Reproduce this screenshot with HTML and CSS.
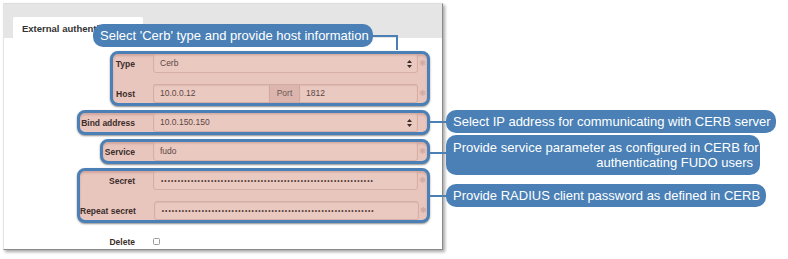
FILE: index.html
```html
<!DOCTYPE html>
<html>
<head>
<meta charset="utf-8">
<link rel="stylesheet" href="styles.css">
</head>
<body>
<div class="canvas">
  <div class="panel">
    <div class="tabs"><div class="tab">External authentication</div></div>
    <div class="form">
      <div class="group g1">
        <div class="row"><span class="lbl">Type</span><div class="field select">Cerb<svg class="arrows" width="5" height="8" viewBox="0 0 5 8"><path d="M2.5 0L5 3H0Z M2.5 8L5 5H0Z" fill="#3a2a28"/></svg></div><span class="req">✱</span></div>
        <div class="row"><span class="lbl">Host</span><div class="split"><div class="field host">10.0.0.12</div><div class="addon">Port</div><div class="field port">1812</div></div><span class="req">✱</span></div>
      </div>
      <div class="group g2">
        <div class="row"><span class="lbl">Bind address</span><div class="field select">10.0.150.150<svg class="arrows" width="5" height="8" viewBox="0 0 5 8"><path d="M2.5 0L5 3H0Z M2.5 8L5 5H0Z" fill="#3a2a28"/></svg></div><span class="req"></span></div>
      </div>
      <div class="group g3">
        <div class="row"><span class="lbl">Service</span><div class="field">fudo</div><span class="req">✱</span></div>
      </div>
      <div class="group g4">
        <div class="row"><span class="lbl">Secret</span><div class="field dots">••••••••••••••••••••••••••••••••••••••••••••••••••••••••••••••••</div><span class="req">✱</span></div>
        <div class="row"><span class="lbl">Repeat secret</span><div class="field dots">••••••••••••••••••••••••••••••••••••••••••••••••••••••••••••••••</div><span class="req">✱</span></div>
      </div>
      <div class="row plain"><span class="lbl">Delete</span><div class="checkcell"><span class="checkbox"></span></div><span class="req"></span></div>
    </div>
  </div>

  <div class="callout c1">Select 'Cerb' type and provide host information</div>
  <div class="link l1"></div>
  <div class="callout c2">Select IP address for communicating with CERB server</div>
  <div class="hline h2"></div>
  <div class="callout c3">Provide service parameter as configured in CERB for<br>authenticating FUDO users</div>
  <div class="hline h3"></div>
  <div class="callout c4">Provide RADIUS client password as defined in CERB</div>
  <div class="hline h4"></div>
</div>
</body>
</html>
```
FILE: styles.css
```css
* { box-sizing: border-box; }
html, body { margin: 0; padding: 0; background: #fff; }
body { font-family: "Liberation Sans", Arial, sans-serif; }

.canvas {
  position: relative;
  width: 788px;
  height: 259px;
  overflow: hidden;
}

.panel {
  margin: 3px 0 0 3px;
  width: 440px;
  height: 247px;
  background: #fff;
  border-right: 1px solid #8a8a8a;
  border-bottom: 1px solid #8a8a8a;
  border-top: 1px solid #dedede;
  border-left: 1px solid #e4e4e4;
  box-shadow: 2px 2px 3px rgba(0,0,0,0.35);
}

.tabs {
  height: 34px;
  background: #e5e5e5;
  padding: 13px 0 0 9px;
}
.tab {
  width: 130px;
  height: 21px;
  background: #fff;
  border-radius: 2px 2px 0 0;
  font-weight: bold;
  font-size: 9.5px;
  color: #333;
  padding: 6px 0 0 9px;
  white-space: nowrap;
}

.form {
  padding-top: 13px;
  display: flex;
  flex-direction: column;
  gap: 4px;
}

.group {
  border: 3px solid #4a80b5;
  border-radius: 8px;
  background: #e8c5bd;
  box-shadow: 0 1px 2px rgba(0,0,0,0.45), inset 0 2px 2px rgba(140,80,70,0.25);
  margin-right: 12px;
  display: flex;
  flex-direction: column;
  gap: 11px;
}
.g1 { margin-left: 106px; }
.g2 { margin-left: 73px; }
.g3 { margin-left: 96px; }
.g4 { margin-left: 73px; }

.row {
  display: grid;
  grid-template-columns: 1fr 265px 9px;
  height: 19px;
  align-items: center;
}
.row.plain { margin: 5px 15px 0 76px; }

.lbl {
  text-align: right;
  padding-right: 18px;
  font-size: 8.5px;
  font-weight: bold;
  color: #3b2d2a;
  white-space: nowrap;
}

.field {
  height: 19px;
  line-height: 17px;
  background: #eac9c1;
  border: 1px solid #d5aea6;
  border-radius: 3px;
  box-shadow: inset 0 1px 1px rgba(120,70,60,0.12);
  font-size: 8.5px;
  color: #5c4844;
  padding-left: 6px;
  position: relative;
}
.select .arrows {
  position: absolute;
  right: 5px;
  top: 5px;
}

.split { display: flex; height: 19px; }
.split .host { width: 116px; border-radius: 3px 0 0 3px; border-right: none; }
.split .addon {
  width: 31px;
  height: 19px;
  line-height: 17px;
  background: #dcb6ae;
  border: 1px solid #d0a9a1;
  font-size: 8.5px;
  color: #6b5753;
  text-align: center;
}
.split .port { flex: 1; border-radius: 0 3px 3px 0; border-left: none; }

.dots {
  font-size: 6.5px;
  letter-spacing: 1.05px;
  color: #4e3834;
  padding-left: 7px;
  line-height: 17px;
  white-space: nowrap;
  overflow: hidden;
}

.req {
  font-size: 8.5px;
  color: #d4aba3;
  text-align: center;
  line-height: 19px;
  font-family: "DejaVu Sans", sans-serif;
}

.checkcell { display: flex; align-items: center; }
.checkbox {
  width: 7px;
  height: 7px;
  border: 1px solid #9a9a9a;
  border-radius: 1.5px;
  background: #fff;
}

/* annotations overlaying the screenshot */
.callout {
  position: absolute;
  background: #4a80b5;
  color: #fff;
  font-size: 13px;
  border-radius: 10px;
  padding: 0 7px;
  white-space: nowrap;
  line-height: 23px;
  height: 23px;
}
.c1 { left: 93px; top: 24px; width: 280px; }
.c2 { left: 446px; top: 110px; width: 330px; }
.c3 {
  left: 446px; top: 135px; width: 314px; height: 40px;
  line-height: 15px; padding: 5px 7px; text-align: right;
}
.c4 { left: 446px; top: 184px; width: 320px; }

.link {
  position: absolute;
  left: 373px;
  top: 35px;
  width: 25px;
  height: 15px;
  border-top: 2px solid #4a80b5;
  border-right: 2px solid #4a80b5;
}
.hline {
  position: absolute;
  left: 430px;
  width: 16px;
  height: 2px;
  background: #4a80b5;
}
.h2 { top: 121px; }
.h3 { top: 152px; }
.h4 { top: 195px; }
```
